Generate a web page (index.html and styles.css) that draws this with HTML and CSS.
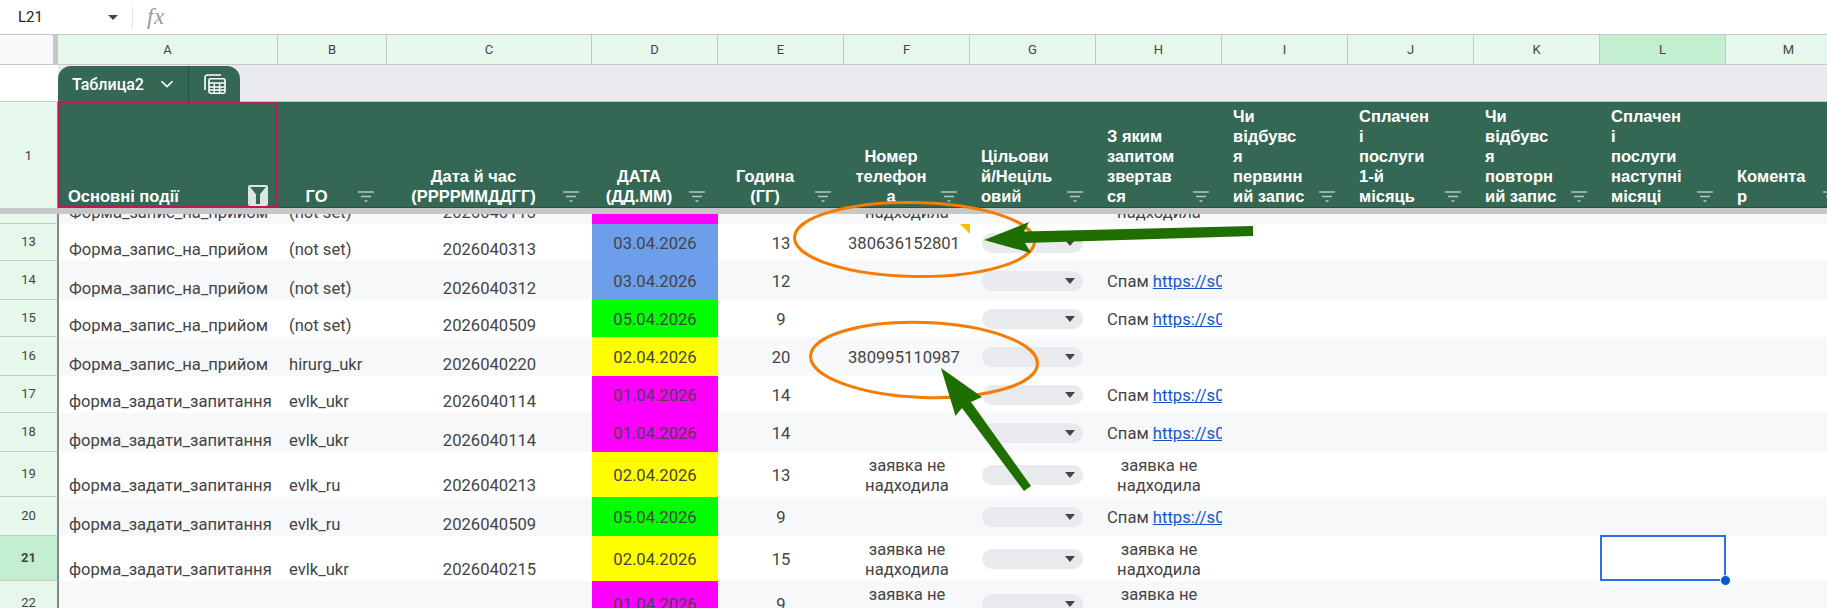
FILE: index.html
```html
<!DOCTYPE html>
<html lang="uk">
<head>
<meta charset="utf-8">
<title>Таблиця</title>
<link rel="stylesheet" href="styles.css">
</head>
<body>
<svg class="defs" width="0" height="0" aria-hidden="true">
  <symbol id="flt" viewBox="0 0 16 11"><path d="M0 1h16M3 5.5h10M6.5 10h3" stroke-width="1.6" fill="none"/></symbol>
</svg>
<div class="sheet">
  <div class="fbar">
    <span class="cellname">L21</span>
    <span class="caret"></span>
    <span class="fsep"></span>
    <span class="fx">fx</span>
  </div>

  <div class="grid colhead">
    <div class="corner"></div>
    <div class="ch">A</div><div class="ch">B</div><div class="ch">C</div><div class="ch">D</div><div class="ch">E</div><div class="ch">F</div><div class="ch">G</div><div class="ch">H</div><div class="ch">I</div><div class="ch">J</div><div class="ch">K</div><div class="ch sel">L</div><div class="ch">M</div>
  </div>

  <div class="tabrow">
    <div class="tabgap"></div>
    <div class="tabtrack">
      <div class="tab">
        <span class="tabname">Таблица2</span>
        <svg class="chev" width="14" height="8" viewBox="0 0 14 8"><path d="M1.5 1.2 7 6.6l5.5-5.4" fill="none" stroke="#fff" stroke-width="1.6"/></svg>
        <span class="tabsep"></span>
        <svg class="calc" width="22" height="20" viewBox="0 0 22 20">
          <path d="M1 16V3.5A2.5 2.5 0 0 1 3.500 1H17" fill="none" stroke="#fff" stroke-width="1.600"/>
          <rect x="5" y="4.800" width="16" height="14.400" rx="1.600" fill="none" stroke="#fff" stroke-width="1.600"/>
          <path d="M5 9h16M5 13h16M5 16h16M10.300 9v10M15.600 9v10" fill="none" stroke="#fff" stroke-width="1.400"/>
        </svg>
      </div>
    </div>
  </div>

  <div class="grid hrow">
    <div class="rh">1</div>
    <div class="hc left first"><span class="ht">Основні події</span>
      <span class="factive"><svg width="16" height="17" viewBox="0 0 14 15"><path d="M0 0h14L8.800 6.500V15H5.200V6.500z" fill="#356854"/></svg></span>
    </div>
    <div class="hc"><span class="ht">ГО</span><svg class="fi"><use href="#flt"/></svg></div>
    <div class="hc"><span class="ht">Дата й час<br>(РРРРММДДГГ)</span><svg class="fi"><use href="#flt"/></svg></div>
    <div class="hc"><span class="ht">ДАТА<br>(ДД.ММ)</span><svg class="fi"><use href="#flt"/></svg></div>
    <div class="hc"><span class="ht">Година<br>(ГГ)</span><svg class="fi"><use href="#flt"/></svg></div>
    <div class="hc"><span class="ht">Номер<br>телефон<br>а</span><svg class="fi"><use href="#flt"/></svg></div>
    <div class="hc left"><span class="ht">Цільови<br>й/Неціль<br>овий</span><svg class="fi"><use href="#flt"/></svg></div>
    <div class="hc left"><span class="ht">З яким<br>запитом<br>звертав<br>ся</span><svg class="fi"><use href="#flt"/></svg></div>
    <div class="hc left"><span class="ht">Чи<br>відбувс<br>я<br>первинн<br>ий запис</span><svg class="fi"><use href="#flt"/></svg></div>
    <div class="hc left"><span class="ht">Сплачен<br>і<br>послуги<br>1-й<br>місяць</span><svg class="fi"><use href="#flt"/></svg></div>
    <div class="hc left"><span class="ht">Чи<br>відбувс<br>я<br>повторн<br>ий запис</span><svg class="fi"><use href="#flt"/></svg></div>
    <div class="hc left"><span class="ht">Сплачен<br>і<br>послуги<br>наступні<br>місяці</span><svg class="fi"><use href="#flt"/></svg></div>
    <div class="hc left"><span class="ht">Комента<br>р</span><svg class="fi"><use href="#flt"/></svg></div>
  </div>

  <div class="freeze"></div>

  <div class="grid row r10 alt clipbottom">
    <div class="rh"></div>
    <div class="c ca">Форма_запис_на_прийом</div><div class="c cb">(not set)</div><div class="c cc">2026040113</div>
    <div class="c mag"></div><div class="c"></div>
    <div class="c tx">надходила</div><div class="c"></div><div class="c tx">надходила</div>
  </div>

  <div class="grid row r37">
    <div class="rh">13</div>
    <div class="c ca">Форма_запис_на_прийом</div><div class="c cb">(not set)</div><div class="c cc">2026040313</div>
    <div class="c mid blue">03.04.2026</div><div class="c mid">13</div>
    <div class="c mid phone">380636152801<span class="note"></span></div>
    <div class="c chipc"><span class="chip"><span class="tri"></span></span></div><div class="c"></div>
  </div>
  <div class="grid row r39 alt">
    <div class="rh">14</div>
    <div class="c ca">Форма_запис_на_прийом</div><div class="c cb">(not set)</div><div class="c cc">2026040312</div>
    <div class="c mid blue">03.04.2026</div><div class="c mid">12</div><div class="c"></div>
    <div class="c chipc"><span class="chip"><span class="tri"></span></span></div>
    <div class="c spam">Спам <a href="#">https://s0</a></div>
  </div>
  <div class="grid row r37">
    <div class="rh">15</div>
    <div class="c ca">Форма_запис_на_прийом</div><div class="c cb">(not set)</div><div class="c cc">2026040509</div>
    <div class="c mid lime">05.04.2026</div><div class="c mid">9</div><div class="c"></div>
    <div class="c chipc"><span class="chip"><span class="tri"></span></span></div>
    <div class="c spam">Спам <a href="#">https://s0</a></div>
  </div>
  <div class="grid row r39 alt">
    <div class="rh">16</div>
    <div class="c ca">Форма_запис_на_прийом</div><div class="c cb">hirurg_ukr</div><div class="c cc">2026040220</div>
    <div class="c mid yel">02.04.2026</div><div class="c mid">20</div>
    <div class="c mid phone">380995110987</div>
    <div class="c chipc"><span class="chip"><span class="tri"></span></span></div><div class="c"></div>
  </div>
  <div class="grid row r37">
    <div class="rh">17</div>
    <div class="c ca">форма_задати_запитання</div><div class="c cb">evlk_ukr</div><div class="c cc">2026040114</div>
    <div class="c mid mag">01.04.2026</div><div class="c mid">14</div><div class="c"></div>
    <div class="c chipc"><span class="chip"><span class="tri"></span></span></div>
    <div class="c spam">Спам <a href="#">https://s0</a></div>
  </div>
  <div class="grid row r39 alt">
    <div class="rh">18</div>
    <div class="c ca">форма_задати_запитання</div><div class="c cb">evlk_ukr</div><div class="c cc">2026040114</div>
    <div class="c mid mag">01.04.2026</div><div class="c mid">14</div><div class="c"></div>
    <div class="c chipc"><span class="chip"><span class="tri"></span></span></div>
    <div class="c spam">Спам <a href="#">https://s0</a></div>
  </div>
  <div class="grid row r45">
    <div class="rh">19</div>
    <div class="c ca">форма_задати_запитання</div><div class="c cb">evlk_ru</div><div class="c cc">2026040213</div>
    <div class="c mid yel">02.04.2026</div><div class="c mid">13</div>
    <div class="c mid two">заявка не<br>надходила</div>
    <div class="c chipc"><span class="chip"><span class="tri"></span></span></div>
    <div class="c mid two">заявка не<br>надходила</div>
  </div>
  <div class="grid row r39 alt">
    <div class="rh">20</div>
    <div class="c ca">форма_задати_запитання</div><div class="c cb">evlk_ru</div><div class="c cc">2026040509</div>
    <div class="c mid lime">05.04.2026</div><div class="c mid">9</div><div class="c"></div>
    <div class="c chipc"><span class="chip"><span class="tri"></span></span></div>
    <div class="c spam">Спам <a href="#">https://s0</a></div>
  </div>
  <div class="grid row r45">
    <div class="rh sel">21</div>
    <div class="c ca">форма_задати_запитання</div><div class="c cb">evlk_ukr</div><div class="c cc">2026040215</div>
    <div class="c mid yel">02.04.2026</div><div class="c mid">15</div>
    <div class="c mid two">заявка не<br>надходила</div>
    <div class="c chipc"><span class="chip"><span class="tri"></span></span></div>
    <div class="c mid two">заявка не<br>надходила</div>
    <div class="c"></div><div class="c"></div><div class="c"></div>
    <div class="c active"><span class="handle"></span></div>
  </div>
  <div class="grid row r45 alt">
    <div class="rh">22</div>
    <div class="c ca"></div><div class="c cb"></div><div class="c cc"></div>
    <div class="c mid mag">01.04.2026</div><div class="c mid">9</div>
    <div class="c mid two">заявка не<br>надходила</div>
    <div class="c chipc"><span class="chip"><span class="tri"></span></span></div>
    <div class="c mid two">заявка не<br>надходила</div>
  </div>

  <svg class="marks" width="1827" height="608" viewBox="0 0 1827 608" aria-hidden="true">
    <ellipse cx="914.500" cy="239.500" rx="120" ry="37" transform="rotate(1 914.500 239.500)" fill="none" stroke="#f57c00" stroke-width="3"/>
    <ellipse cx="924" cy="360" rx="113.500" ry="37.500" transform="rotate(2 924 360)" fill="none" stroke="#f57c00" stroke-width="3"/>
    <path d="M984 240 1029 222 1024 231.500 1253 226 1253 236 1025 243 1031 253z" fill="#1e6f00"/>
    <path d="M941 368 982 397 971 402 1031 486 1024 491 962 408 955.500 416z" fill="#1e6f00"/>
  </svg>
</div>
</body>
</html>
```

FILE: styles.css
```css
* { box-sizing: border-box; }
html, body { margin: 0; padding: 0; background: #fff; }
body { width: 1827px; height: 608px; overflow: hidden; font-family: Roboto, "Noto Sans", sans-serif; color: #444; }
.defs { position: absolute; }
.sheet { position: relative; width: 1827px; height: 608px; overflow: hidden; }

.fbar { height: 35px; display: flex; align-items: center; border-bottom: 1px solid #c7c7c7; padding-left: 18px; background: #fff; }
.cellname { width: 90px; font-size: 15px; color: #222; }
.caret { width: 0; height: 0; border-left: 5px solid transparent; border-right: 5px solid transparent; border-top: 5px solid #444; }
.fsep { width: 1px; height: 21px; background: #e0e3e6; margin-left: 14px; }
.fx { font-family: "Liberation Serif", serif; font-style: italic; font-size: 23px; color: #9a9a9a; margin-left: 14px; letter-spacing: .5px; }

.grid { display: grid; grid-template-columns: 58px 220px 109px 205px repeat(10, 126px); grid-template-rows: 100%; width: 1900px; }

.colhead { height: 30px; border-bottom: 1px solid #c7c7c7; }
.corner { background: #f8f9fa; border-right: 5px solid #c7c7c7; }
.ch { background: #e6f7ec; border-right: 1px solid #c7c7c7; display: flex; align-items: center; justify-content: center; font-size: 13px; color: #444; }
.ch.sel { background: #c4eed0; }

.tabrow { display: flex; height: 37px; border-bottom: 1px solid #c7c7c7; }
.tabgap { width: 58px; background: #fff; }
.tabtrack { flex: 1; background: #e8eaed; padding-top: 1px; }
.tab { width: 182px; height: 36px; background: #356854; border-radius: 13px 13px 0 0; display: flex; align-items: center; color: #fff; padding-left: 14px; }
.tabname { font-size: 16px; font-weight: 500; width: 88px; }
.chev { margin-left: 0; }
.tabsep { width: 1px; height: 36px; background: #26503e; margin-left: 14px; }
.calc { margin-left: 15px; }

.hrow { height: 106px; }
.hrow .rh { background: #e6f7ec; border-bottom: none; }
.hc { background: #356854; border-top: 1px solid #1e6b3a; border-bottom: 1px solid #2a4f3e; display: flex; align-items: flex-end; padding: 0 13px 1px 0; color: #fff; font-family: "Liberation Sans", Arial, sans-serif; font-weight: 700; font-size: 16.500px; line-height: 20px; white-space: nowrap; }
.hc .ht { flex: 1; text-align: center; }
.hc.left { padding-left: 11px; }
.hc.left .ht { text-align: left; }
.hc .fi { width: 16px; height: 11px; margin: 0 0 4px 3px; stroke: #b3c5bc; flex: none; }
.hc.first { padding-left: 8px; padding-right: 8px; padding-bottom: 0; border: 2px solid #c2185b; border-top-width: 1px; align-items: flex-end; justify-content: space-between; }
.factive { width: 20px; height: 21px; background: #dde5e1; border-radius: 2px; display: flex; align-items: center; justify-content: center; flex: none; margin-bottom: 0; }

.freeze { height: 6px; background: #c7c7c7; }

.row { font-size: 16.600px; line-height: 20px; background: #fff; overflow: hidden; }
.row.alt { background: #f7f8fa; }
.r10 { height: 10px; }
.r37 { height: 37px; }
.r39 { height: 39px; }
.r45 { height: 45px; }

.rh { background: #e6f7ec; border-bottom: 1px solid #c7c7c7; border-right: 1px solid #7d8a85; display: flex; align-items: center; justify-content: center; font-size: 13px; color: #444; }
.rh.sel { background: #c4eed0; font-weight: 700; }

.c { position: relative; min-width: 0; min-height: 0; white-space: nowrap; }
.ca, .cb, .cc { display: flex; align-items: flex-end; padding-bottom: 1px; }
.ca { padding-left: 10px; border-left: 1px solid #7d8a85; }
.cb { padding-left: 11px; }
.cc { justify-content: center; }
.clipbottom .c { display: flex; align-items: flex-end; justify-content: center; padding-bottom: 1px; }
.clipbottom .ca, .clipbottom .cb { justify-content: flex-start; }
.mid { display: flex; align-items: center; justify-content: center; text-align: center; padding-top: 2px; }
.phone { padding-right: 6px; }
.two { padding-top: 3px; }
.blue { background: #6d9eeb; }
.lime { background: #00ff00; }
.yel { background: #ffff00; }
.mag { background: #ff00ff; }
.note { position: absolute; top: 0; right: 0; width: 0; height: 0; border-top: 10px solid #fbbc04; border-left: 10px solid transparent; }
.chipc { display: flex; align-items: center; padding: 1px 0 0 12px; }
.chip { width: 101px; height: 20px; border-radius: 10px; background: #e8eaed; display: flex; align-items: center; justify-content: flex-end; padding-right: 8px; }
.tri { width: 0; height: 0; border-left: 5px solid transparent; border-right: 5px solid transparent; border-top: 6px solid #444; }
.spam { display: flex; align-items: center; padding: 2px 0 0 11px; overflow: hidden; white-space: pre; }
.spam a { color: #1155cc; text-decoration: underline; }
.active { border: 2px solid #2f6fe4; margin-top: -1px; overflow: visible; }
.row:has(.active) { overflow: visible; z-index: 2; position: relative; }
.handle { position: absolute; right: -7px; bottom: -7px; width: 11px; height: 11px; border-radius: 50%; background: #0b57d0; border: 1px solid #fff; }
.marks { position: absolute; left: 0; top: 0; z-index: 5; pointer-events: none; }
```
